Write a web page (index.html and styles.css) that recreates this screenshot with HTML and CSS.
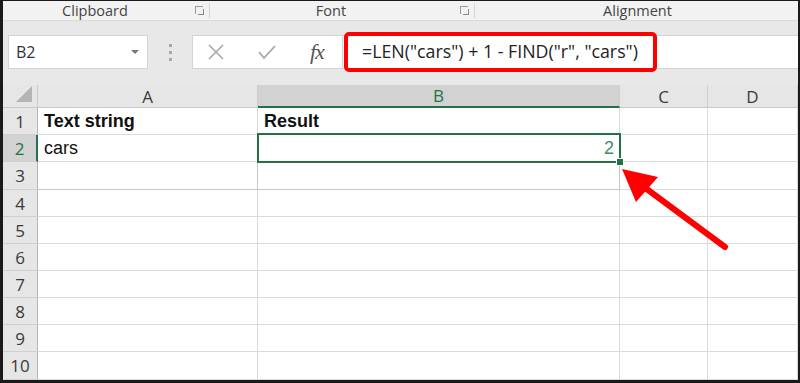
FILE: index.html
```html
<!DOCTYPE html>
<html lang="en">
<head>
    <meta charset="UTF-8">
    <title>LEN and FIND formula</title>
    <link rel="stylesheet" href="styles.css">
</head>
<body>
    <div class="frame">
        <div class="ribbon-labels">
            <div class="group clip">Clipboard<span class="launcher"></span></div>
            <div class="group font">Font<span class="launcher"></span></div>
            <div class="group align">Alignment</div>
        </div>

        <div class="formula-bar">
            <div class="name-box">
                <span>B2</span>
                <svg width="10" height="6" viewBox="0 0 10 6"><path d="M1 1 L5 5 L9 1 Z" fill="#777"/></svg>
            </div>
            <div class="grip"><i></i><i></i><i></i></div>
            <div class="fx-buttons">
                <svg width="16" height="16" viewBox="0 0 16 16"><path d="M1 1 L15 15 M15 1 L1 15" stroke="#a6a6a6" stroke-width="1.5"/></svg>
                <svg width="18" height="16" viewBox="0 0 18 16"><path d="M1 8 L6 14 L17 2" stroke="#a6a6a6" stroke-width="1.8" fill="none"/></svg>
                <span class="fx">fx</span>
            </div>
            <div class="formula-input">
                <span class="formula">=LEN("cars") + 1 - FIND("r", "cars")</span>
            </div>
        </div>

        <div class="sheet">
            <div class="hdr corner"><span class="tri"></span></div>
            <div class="hdr col">A</div>
            <div class="hdr col active">B</div>
            <div class="hdr col">C</div>
            <div class="hdr col">D</div>

            <div class="hdr row">1</div>
            <div class="cell bold">Text string</div>
            <div class="cell bold">Result</div>
            <div class="cell"></div>
            <div class="cell"></div>

            <div class="hdr row active">2</div>
            <div class="cell">cars</div>
            <div class="cell num selected">2</div>
            <div class="cell"></div>
            <div class="cell"></div>

            <div class="hdr row">3</div>
            <div class="cell dim"></div>
            <div class="cell dim"></div>
            <div class="cell"></div>
            <div class="cell"></div>

            <div class="hdr row">4</div><div class="cell"></div><div class="cell"></div><div class="cell"></div><div class="cell"></div>
            <div class="hdr row">5</div><div class="cell"></div><div class="cell"></div><div class="cell"></div><div class="cell"></div>
            <div class="hdr row">6</div><div class="cell"></div><div class="cell"></div><div class="cell"></div><div class="cell"></div>
            <div class="hdr row">7</div><div class="cell"></div><div class="cell"></div><div class="cell"></div><div class="cell"></div>
            <div class="hdr row">8</div><div class="cell"></div><div class="cell"></div><div class="cell"></div><div class="cell"></div>
            <div class="hdr row">9</div><div class="cell"></div><div class="cell"></div><div class="cell"></div><div class="cell"></div>
            <div class="hdr row">10</div><div class="cell"></div><div class="cell"></div><div class="cell"></div><div class="cell"></div>
        </div>

        <!-- annotation arrow pointing at the fill handle -->
        <svg class="arrow" width="800" height="383" viewBox="0 0 800 383">
            <polygon points="622,169 658,177 636,202" fill="#ff0000"/>
            <line x1="644" y1="187" x2="725" y2="247" stroke="#ff0000" stroke-width="6" stroke-linecap="round"/>
        </svg>
    </div>
</body>
</html>
```

FILE: styles.css
```css
body {
    margin: 0;
    background: white;
}
.frame {
    position: relative;
    width: 800px;
    height: 383px;
    box-sizing: border-box;
    border: solid #1a1a1a;
    border-width: 1px 2px 3px 3px;
    background: white;
    overflow: hidden;
}

/* ribbon group captions */
.ribbon-labels {
    display: flex;
    height: 19px;
    background: #f2f2f2;
    border-bottom: 1px solid #dadada;
    font-family: "Open Sans", sans-serif;
    font-size: 14.5px;
    color: #444;
}
.group {
    position: relative;
    text-align: center;
    border-right: 1px solid #d6d6d6;
    margin: 2px 0;
    line-height: 15px;
}
.group.clip { width: 207px; padding-right: 22px; box-sizing: border-box; }
.group.font { width: 265px; padding-right: 22px; box-sizing: border-box; }
.group.align { flex: 1; border-right: none; padding-left: 2px; }
.launcher {
    position: absolute;
    right: 6px;
    top: 3px;
    width: 7px;
    height: 7px;
    border-left: 1px solid #999;
    border-top: 1px solid #999;
}
.launcher::after {
    content: "";
    position: absolute;
    left: 2px;
    top: 2px;
    width: 5px;
    height: 5px;
    border-right: 1px solid #888;
    border-bottom: 1px solid #888;
}

/* name box + formula line */
.formula-bar {
    display: flex;
    align-items: center;
    height: 64px;
    background: #e8e8e8;
    padding-left: 5px;
}
.name-box {
    display: flex;
    align-items: center;
    justify-content: space-between;
    width: 140px;
    height: 34px;
    box-sizing: border-box;
    background: white;
    border: 1px solid #d4d4d4;
    padding: 0 7px 0 7px;
    font-family: "Open Sans", sans-serif;
    font-size: 16px;
    color: #2b3440;
    margin-top: -2px;
}
.grip {
    display: flex;
    flex-direction: column;
    gap: 4px;
    width: 44px;
    align-items: center;
    margin-top: -2px;
}
.grip i {
    width: 3px;
    height: 3px;
    background: #a8a8a8;
}
.fx-buttons {
    display: flex;
    align-items: center;
    gap: 34px;
    width: 151px;
    height: 34px;
    box-sizing: border-box;
    background: white;
    border: 1px solid #d4d4d4;
    padding-left: 15px;
    margin-top: -2px;
}
.fx {
    font-family: "Liberation Serif", serif;
    font-style: italic;
    font-size: 22px;
    color: #555;
    letter-spacing: -1px;
}
.formula-input {
    flex: 1;
    display: flex;
    align-items: center;
    height: 34px;
    background: white;
    border-top: 1px solid #d4d4d4;
    border-bottom: 1px solid #d4d4d4;
    box-sizing: border-box;
    margin-top: -2px;
}
.formula {
    box-sizing: border-box;
    height: 40px;
    width: 313px;
    margin-left: 1px;
    border: 4px solid #ff0000;
    border-radius: 5px;
    padding-left: 14px;
    font-family: "Open Sans", sans-serif;
    font-size: 17.8px;
    line-height: 31px;
    color: #222;
    white-space: nowrap;
}

/* worksheet grid */
.sheet {
    display: grid;
    grid-template-columns: 35px 220px 362px 88px 1fr;
    grid-template-rows: 23px 27px 27px 28px 27px 27px 27px 27px 27px 27px 28px;
}
.hdr {
    box-sizing: border-box;
    background: #e6e6e6;
    border-right: 1px solid #cfcfcf;
    border-bottom: 1px solid #c8c8c8;
    font-family: "Open Sans", sans-serif;
    font-size: 17px;
    color: #3a3a3a;
    display: flex;
    align-items: center;
    justify-content: center;
}
.hdr.row { border-bottom-color: #d0d0d0; border-right-color: #b5b5b5; }
.hdr.col.active {
    background: #d2d2d2;
    border-bottom: 2px solid #217346;
    color: #217346;
}
.hdr.row.active {
    background: #d2d2d2;
    border-right: 2px solid #217346;
    color: #217346;
}
.corner {
    position: relative;
    border-right-color: #c8c8c8;
}
.tri {
    position: absolute;
    right: 5px;
    bottom: 5px;
    width: 16px;
    height: 16px;
    background: #b4b4b4;
    clip-path: polygon(100% 0, 100% 100%, 0 100%);
}
.cell {
    box-sizing: border-box;
    border-right: 1px solid #dadada;
    border-bottom: 1px solid #dadada;
    font-family: "Liberation Sans", Arial, sans-serif;
    font-size: 18px;
    color: #111;
    padding: 0 6px;
    line-height: 26px;
    white-space: nowrap;
}
.cell.bold { font-weight: bold; }
.cell.dim {
    border-right-color: #c6c6c6;
    border-bottom-color: #c6c6c6;
}
.cell.num {
    text-align: right;
    color: #3c8f63;
    padding-right: 5px;
}
.cell.selected {
    position: relative;
}
.cell.selected::before {
    content: "";
    position: absolute;
    left: -1px;
    top: -2px;
    right: -2px;
    bottom: -2px;
    border: 2px solid #217346;
}
.cell.selected::after {
    content: "";
    position: absolute;
    right: -5px;
    bottom: -5px;
    width: 6px;
    height: 6px;
    background: #217346;
    border: 1px solid white;
}

.arrow {
    position: absolute;
    left: -3px;
    top: -1px;
    pointer-events: none;
}
```
